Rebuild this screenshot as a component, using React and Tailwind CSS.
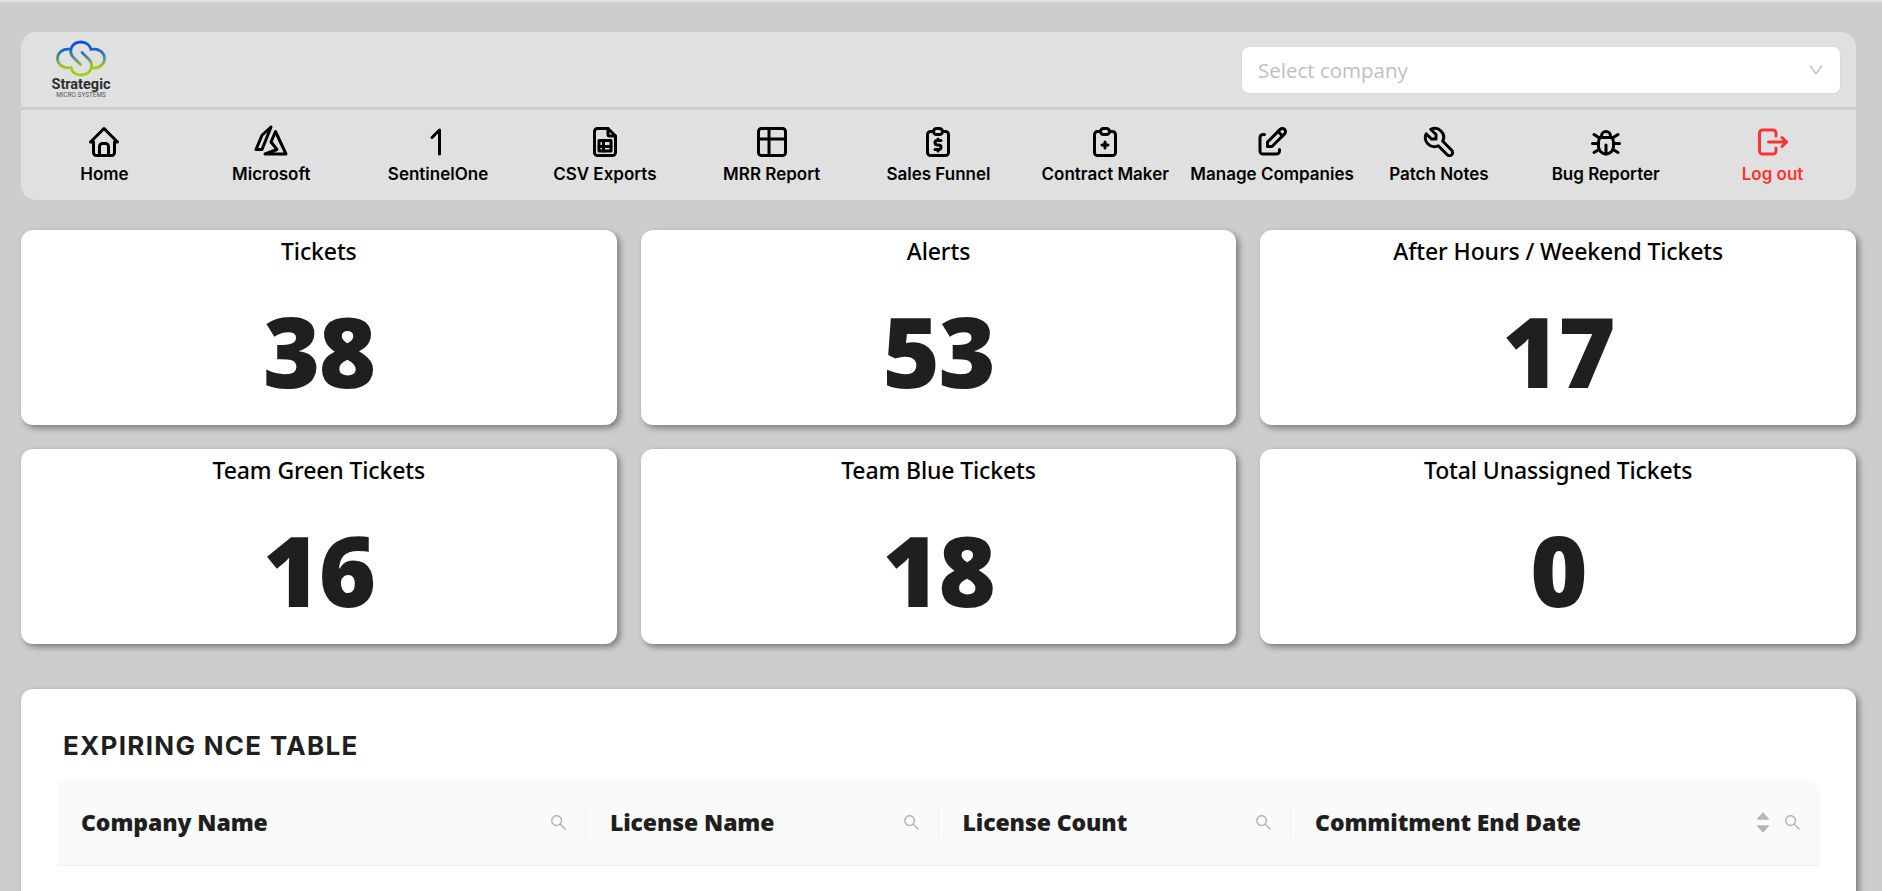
import React from "react";
import { AiOutlineSearch, AiOutlineDown, AiFillCaretUp, AiFillCaretDown } from "react-icons/ai";

const navItems = [
  { label: "Home", paths: ["M5 12l-2 0l9 -9l9 9l-2 0", "M5 12v7a2 2 0 0 0 2 2h10a2 2 0 0 0 2 -2v-7", "M9 21v-6a2 2 0 0 1 2 -2h2a2 2 0 0 1 2 2v6"] },
  { label: "Microsoft", paths: ["M6 7.5l-4 9.5h4l6 -15z", "M22 20l-7 -15l-3 7l4 5l-8 3z"] },
  { label: "SentinelOne", paths: ["M13 20v-16l-5 5"] },
  { label: "CSV Exports", paths: ["M14 3v4a1 1 0 0 0 1 1h4", "M17 21h-10a2 2 0 0 1 -2 -2v-14a2 2 0 0 1 2 -2h7l5 5v11a2 2 0 0 1 -2 2z", "M8 11h8v7h-8z", "M8 15h8", "M11 11v7"] },
  { label: "MRR Report", paths: ["M3 5a2 2 0 0 1 2 -2h14a2 2 0 0 1 2 2v14a2 2 0 0 1 -2 2h-14a2 2 0 0 1 -2 -2v-14z", "M3 10h18", "M10 3v18"] },
  { label: "Sales Funnel", paths: ["M9 5h-2a2 2 0 0 0 -2 2v12a2 2 0 0 0 2 2h10a2 2 0 0 0 2 -2v-12a2 2 0 0 0 -2 -2h-2", "M9 5a2 2 0 0 1 2 -2h2a2 2 0 0 1 0 4h-2a2 2 0 0 1 -2 -2z", "M14 11h-2.5a1.5 1.5 0 0 0 0 3h1a1.5 1.5 0 0 1 0 3h-2.5", "M12 17v1m0 -8v1"] },
  { label: "Contract Maker", paths: ["M9 5h-2a2 2 0 0 0 -2 2v12a2 2 0 0 0 2 2h10a2 2 0 0 0 2 -2v-12a2 2 0 0 0 -2 -2h-2", "M9 5a2 2 0 0 1 2 -2h2a2 2 0 0 1 0 4h-2a2 2 0 0 1 -2 -2z", "M10 14l4 0", "M12 12l0 4"] },
  { label: "Manage Companies", paths: ["M7 7h-1a2 2 0 0 0 -2 2v9a2 2 0 0 0 2 2h9a2 2 0 0 0 2 -2v-1", "M20.385 6.585a2.1 2.1 0 0 0 -2.97 -2.97l-8.415 8.385v3h3l8.385 -8.415z", "M16 5l3 3"] },
  { label: "Patch Notes", paths: ["M7 10h3v-3l-3.5 -3.5a6 6 0 0 1 8 8l6 6a2 2 0 0 1 -3 3l-6 -6a6 6 0 0 1 -8 -8l3.5 3.5"] },
  { label: "Bug Reporter", paths: ["M9 9v-1a3 3 0 0 1 6 0v1", "M8 9h8a6 6 0 0 1 1 3v3a5 5 0 0 1 -10 0v-3a6 6 0 0 1 1 -3", "M3 13l4 0", "M17 13l4 0", "M12 20l0 -6", "M4 19l3.35 -2", "M20 19l-3.35 -2", "M4 7l3.75 2.4", "M20 7l-3.75 2.4"] },
  { label: "Log out", danger: true, paths: ["M14 8v-2a2 2 0 0 0 -2 -2h-7a2 2 0 0 0 -2 2v12a2 2 0 0 0 2 2h7a2 2 0 0 0 2 -2v-2", "M9 12h12l-3 -3", "M18 15l3 -3"] },
];

const stats = [
  ["Tickets", 38],
  ["Alerts", 53],
  ["After Hours / Weekend Tickets", 17],
  ["Team Green Tickets", 16],
  ["Team Blue Tickets", 18],
  ["Total Unassigned Tickets", 0],
];

const columns = [
  { title: "Company Name" },
  { title: "License Name" },
  { title: "License Count" },
  { title: "Commitment End Date", sortable: true },
];

function Logo() {
  return (
    <div className="flex w-[60px] flex-col items-center">
      <svg viewBox="0 0 50 36" className="-mt-px h-[37px] w-[50px]" fill="none" stroke="url(#cloud)" strokeWidth="2.8" strokeLinecap="round">
        <defs>
          <linearGradient id="cloud" x1="0" y1="1" x2="0" y2="35" gradientUnits="userSpaceOnUse">
            <stop offset="0" stopColor="#0a50e0" />
            <stop offset="0.18" stopColor="#0f5bd0" />
            <stop offset="0.5" stopColor="#4f968c" />
            <stop offset="0.72" stopColor="#9cc81e" />
            <stop offset="1" stopColor="#a4cc1a" />
          </linearGradient>
        </defs>
        <path d="M24.500 24L17.500 17C11.500 10.500 16 1.500 25 1.500C30.500 1.500 34 5 35 9C42.500 7.300 48.500 12 48.500 18C48.500 24 42.500 29 35.500 27" />
        <path d="M26 12L33 19C39 25.500 34 34.500 25 34.500C19.500 34.500 16 31.500 15 27C7.500 28.500 1.500 24 1.500 18C1.500 12 7 7.800 14 8.700" />
      </svg>
      <span className="font-[Roboto,sans-serif] text-[14.500px] leading-[15px] font-bold text-[#2d2d2f]">Strategic</span>
      <span className="font-[Roboto,sans-serif] text-[6.400px] leading-[6px] whitespace-nowrap text-[#555555]">MICRO SYSTEMS</span>
    </div>
  );
}

function NavItem({ label, paths, danger }) {
  return (
    <a className={`flex flex-1 basis-0 flex-col items-center pt-[14px] ${danger ? "text-[#fa3434]" : "text-black"}`}>
      <svg viewBox="0 0 24 24" className="h-9 w-9" fill="none" stroke="currentColor" strokeWidth="2" strokeLinecap="round" strokeLinejoin="round">
        {paths.map((d) => (
          <path key={d} d={d} />
        ))}
      </svg>
      <span className="text-[17px] leading-[28px] font-semibold whitespace-nowrap">{label}</span>
    </a>
  );
}

function StatCard({ title, value }) {
  return (
    <div className="flex h-[195px] flex-col items-center rounded-xl bg-white font-['Noto_Sans',sans-serif] shadow-[3px_3px_6px_rgba(0,0,0,0.4)]">
      <span className="mt-[5px] text-[23px] leading-[33px] font-medium tracking-[-0.120px] text-black">{title}</span>
      <span className="mt-[32px] text-[98px] leading-[100px] font-black tracking-[-1.500px] text-[#1f1f1f]">{value}</span>
    </div>
  );
}

export default function App() {
  return (
    <div className="h-[891px] w-full overflow-hidden border-t-2 border-[#e0e0e0] bg-[#cdcdcd] pt-[30px] pr-[26px] pl-[21px] font-[Inter,sans-serif]">
      <header className="overflow-hidden rounded-[15px] bg-[#e0e0e0]">
        <div className="flex h-[75px] items-center justify-between pr-[15px] pl-[30px]">
          <Logo />
          <div className="mt-px flex h-[48px] w-[600px] items-center justify-between rounded-lg border border-[#d9d9d9] bg-white pr-[15px] pl-4 font-['Open_Sans',sans-serif] text-[20.500px] text-[#bfbfbf]">
            <span>Select company</span>
            <AiOutlineDown className="h-[18px] w-[18px]" />
          </div>
        </div>
        <nav className="flex h-[93px] border-t-[3px] border-[#cdcdcd]">
          {navItems.map((item) => (
            <NavItem key={item.label} {...item} />
          ))}
        </nav>
      </header>

      <section className="mt-[30px] grid grid-cols-3 gap-6">
        {stats.map(([title, value]) => (
          <StatCard key={title} title={title} value={value} />
        ))}
      </section>

      <section className="mt-[45px] h-[300px] rounded-xl bg-white px-9 pt-[39px] shadow-[3px_3px_6px_rgba(0,0,0,0.4)]">
        <h2 className="pl-[6px] text-[26px] leading-[36px] font-bold tracking-[1.300px] text-[#1f1f1f]">EXPIRING NCE TABLE</h2>
        <div className="mt-[15px] grid h-[87px] grid-cols-[3fr_2fr_2fr_3fr] items-center rounded-t-xl border-b border-[#f0f0f0] bg-[#fafafa]">
          {columns.map(({ title, sortable }, i) => (
            <div key={title} className={`flex h-8 items-center justify-between pl-6 ${i < 3 ? "border-r border-[#f0f0f0] pr-[17px]" : "pr-[18px]"}`}>
              <span className="font-['Noto_Sans',sans-serif] text-[23px] font-black tracking-[-0.100px] whitespace-nowrap text-[#1f1f1f]">{title}</span>
              <span className="flex items-center gap-[11px] text-[#b5b5b5]">
                {sortable && (
                  <span className="flex flex-col items-center">
                    <AiFillCaretUp className="-mb-[5px] h-[18px] w-[18px]" />
                    <AiFillCaretDown className="h-[18px] w-[18px]" />
                  </span>
                )}
                <AiOutlineSearch className="h-[19px] w-[19px]" />
              </span>
            </div>
          ))}
        </div>
      </section>
    </div>
  );
}
